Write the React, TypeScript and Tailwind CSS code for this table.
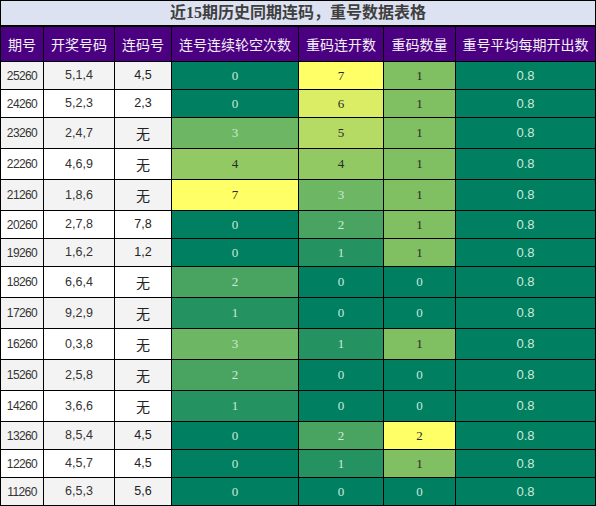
import React from "react";

type Row = { p: string; n: string; l: string; a: number; b: number; c: number };

const rows: Row[] = [
  { p: "25260", n: "5,1,4", l: "4,5", a: 0, b: 7, c: 1 },
  { p: "24260", n: "5,2,3", l: "2,3", a: 0, b: 6, c: 1 },
  { p: "23260", n: "2,4,7", l: "无", a: 3, b: 5, c: 1 },
  { p: "22260", n: "4,6,9", l: "无", a: 4, b: 4, c: 1 },
  { p: "21260", n: "1,8,6", l: "无", a: 7, b: 3, c: 1 },
  { p: "20260", n: "2,7,8", l: "7,8", a: 0, b: 2, c: 1 },
  { p: "19260", n: "1,6,2", l: "1,2", a: 0, b: 1, c: 1 },
  { p: "18260", n: "6,6,4", l: "无", a: 2, b: 0, c: 0 },
  { p: "17260", n: "9,2,9", l: "无", a: 1, b: 0, c: 0 },
  { p: "16260", n: "0,3,8", l: "无", a: 3, b: 1, c: 1 },
  { p: "15260", n: "2,5,8", l: "无", a: 2, b: 0, c: 0 },
  { p: "14260", n: "3,6,6", l: "无", a: 1, b: 0, c: 0 },
  { p: "13260", n: "8,5,4", l: "4,5", a: 0, b: 2, c: 2 },
  { p: "12260", n: "4,5,7", l: "4,5", a: 0, b: 1, c: 1 },
  { p: "11260", n: "6,5,3", l: "5,6", a: 0, b: 0, c: 0 },
];

function scale(v: number, max: number) {
  const t = max === 0 ? 0 : v / max;
  const r = Math.round(255 * t);
  const g = Math.round(128 + 127 * t);
  const b = Math.round(96 + 6 * t);
  return { bg: `rgb(${r},${g},${b})`, dark: t >= 0.5 };
}

const cellBase = "border-r border-b border-black flex items-center justify-center shrink-0";
const widths = ["w-[44px] border-l", "w-[71px]", "w-[57px]", "w-[127px]", "w-[85px]", "w-[72px]", "w-[140px]"];

function ValCell({ v, max, w }: { v: number; max: number; w: string }) {
  const s = scale(v, max);
  return (
    <div
      className={`${cellBase} ${w} text-[13px] font-['Liberation_Serif',serif]`}
      style={{ backgroundColor: s.bg, color: s.dark ? "#2a2a2a" : "#cde9de" }}
    >
      {v}
    </div>
  );
}

export default function App() {
  const headers = ["期号", "开奖号码", "连码号", "连号连续轮空次数", "重码连开数", "重码数量", "重号平均每期开出数"];
  return (
    <div className="w-[596px] bg-white">
      <div className="h-[27px] border-t border-x border-b-2 border-black bg-[#dce2f1] flex items-center justify-center text-[16px] font-bold text-[#3f3f3f] font-['Liberation_Serif','Noto_Sans_CJK_SC',sans-serif]">
        近15期历史同期连码，重号数据表格
      </div>
      <div className="flex h-[35px] bg-[#4b0082] text-[#f4f0f8] text-[14px] font-['Noto_Sans_CJK_SC',sans-serif]">
        {headers.map((h, i) => (
          <div key={i} className={`${cellBase} ${widths[i]}`}>
            {h}
          </div>
        ))}
      </div>
      {rows.map((r, i) => {
        const bg = i % 2 === 0 ? "bg-[#f3f3f3]" : "bg-white";
        const h = r.l === "无" ? "h-[31px]" : "h-[28px]";
        return (
          <div key={r.p} className={`flex ${h}`}>
            <div className={`${cellBase} ${widths[0]} ${bg} text-[12px] tracking-[-0.6px] text-[#333] font-['Liberation_Sans',sans-serif]`}>
              {r.p}
            </div>
            <div className={`${cellBase} ${widths[1]} ${bg} text-[12.5px] text-[#333] font-['Liberation_Sans',sans-serif]`}>
              {r.n}
            </div>
            <div
              className={`${cellBase} ${widths[2]} ${bg} text-[#222] ${
                r.l === "无" ? "text-[14px] font-['Noto_Sans_CJK_SC',sans-serif]" : "text-[12.5px] font-['Liberation_Sans',sans-serif]"
              }`}
            >
              {r.l}
            </div>
            <ValCell v={r.a} max={7} w={widths[3]} />
            <ValCell v={r.b} max={7} w={widths[4]} />
            <ValCell v={r.c} max={2} w={widths[5]} />
            <div className={`${cellBase} ${widths[6]} bg-[#008060] text-[#cde9de] text-[13px] font-['Liberation_Sans',sans-serif]`}>
              0.8
            </div>
          </div>
        );
      })}
    </div>
  );
}
